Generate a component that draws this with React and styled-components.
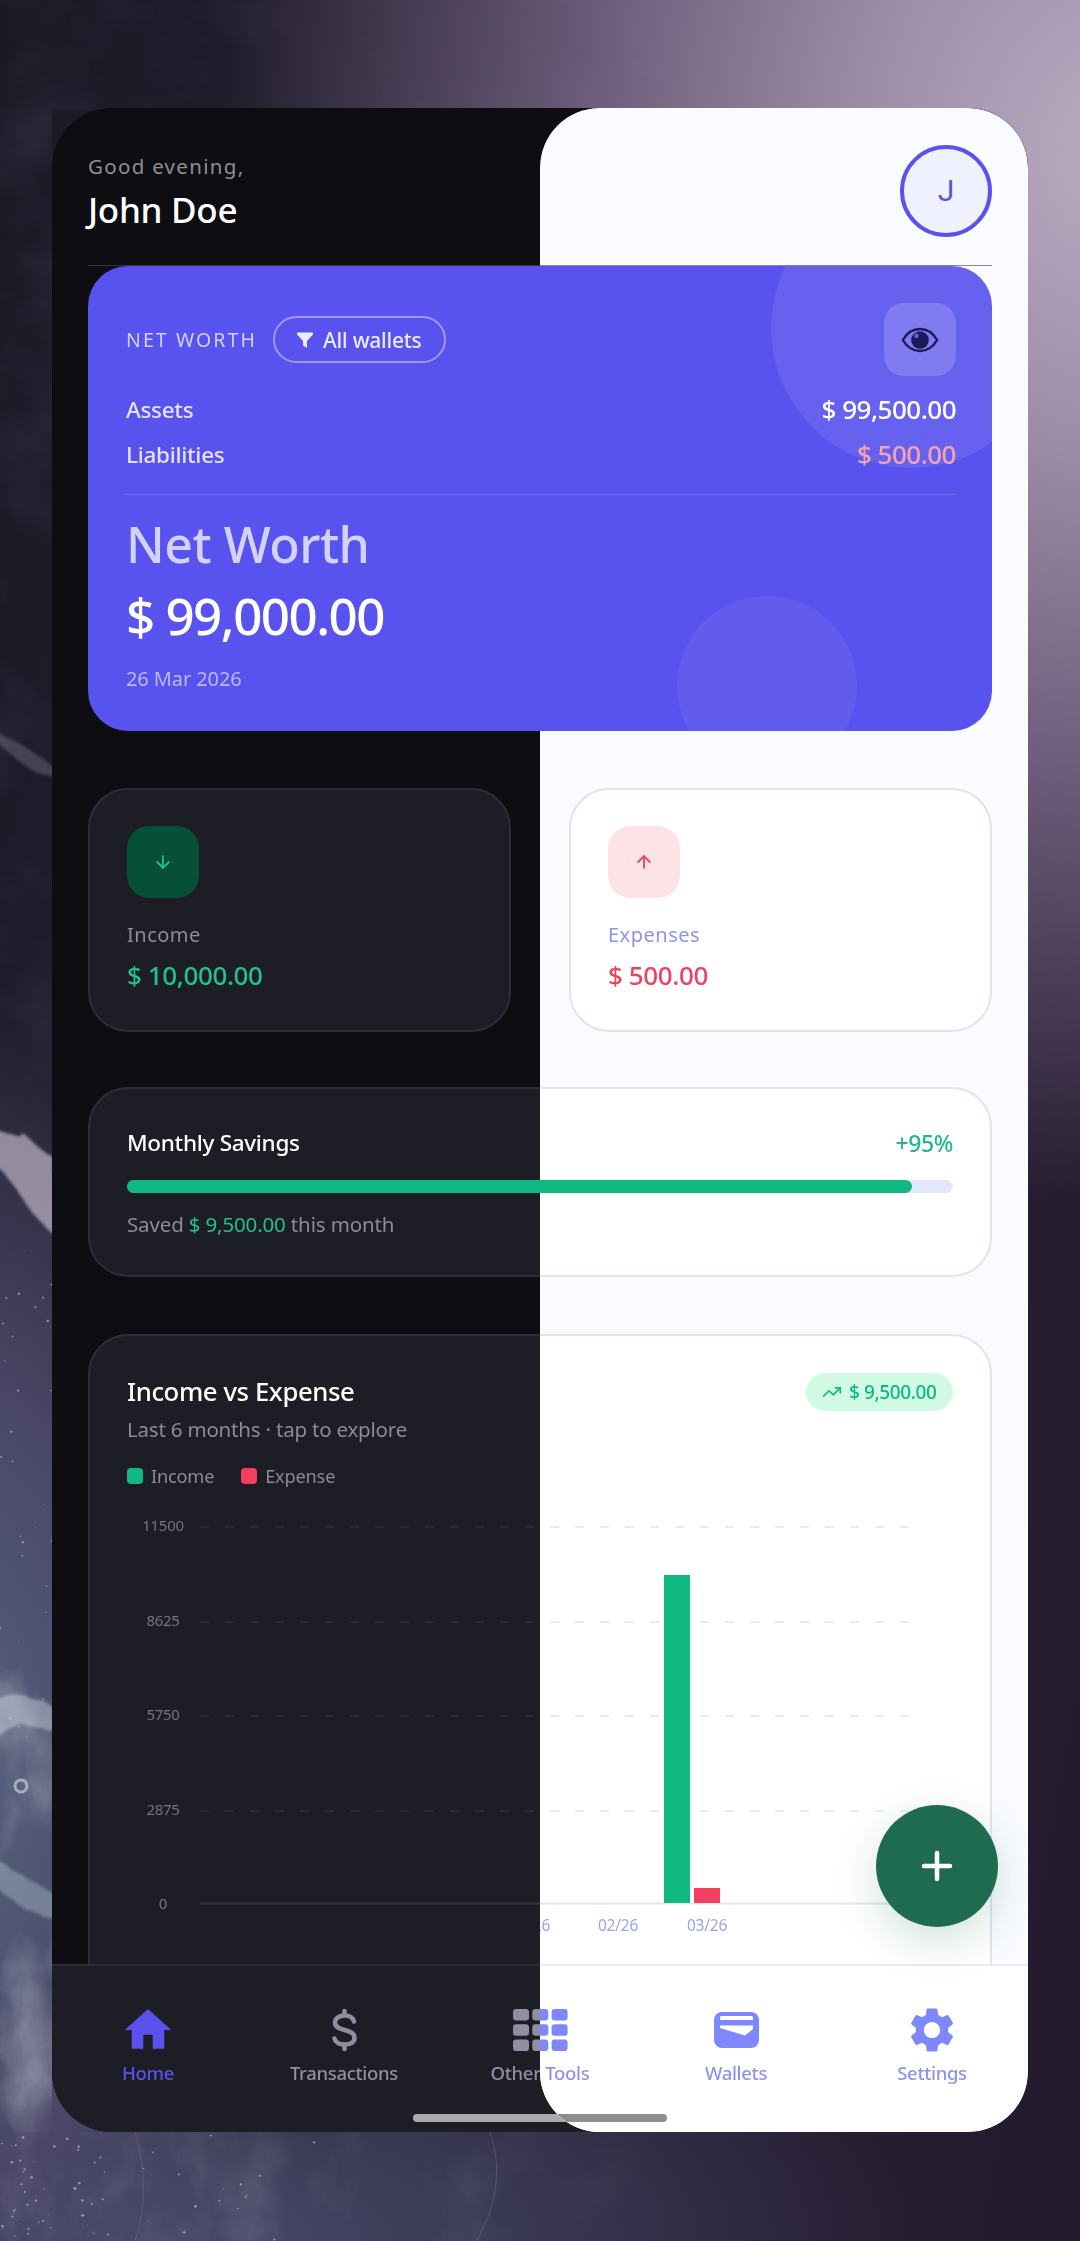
import React from 'react';
import styled, { createGlobalStyle, ThemeProvider } from 'styled-components';
import { ArrowDown, ArrowUp, TrendingUp } from 'lucide-react';
import { MdHome, MdSettings } from 'react-icons/md';

const FONT = '"Noto Sans", "Open Sans", sans-serif';

const darkTheme = {
  name: 'dark',
  screen: '#0d0d12', card: '#1c1d25', border: '#2c2e3b', headerLine: 'rgba(255,255,255,.16)',
  navBg: '#1c1d25', navBorder: '#2a2b36',
  navIcon: '#8f8fa1', navText: '#8f8fa1', grid: '#2e2f3a', axis: '#33343f', tick: '#74757f',
  handle: '#ababab', track: '#10b981', plotted: false,
};
const lightTheme = {
  name: 'light',
  screen: '#f9fbfe', card: '#ffffff', border: '#dfe3f4', headerLine: '#85858c',
  navBg: '#ffffff', navBorder: '#e9ecf8',
  navIcon: '#7f88fb', navText: '#8f94e8', grid: '#e2e5f0', axis: '#e2e6f2', tick: '#9ea2ea',
  handle: '#8e8e8e', track: '#e2e8fb', plotted: true,
};

const Global = createGlobalStyle`
  html, body { margin: 0; padding: 0; }
  body {
    font-family: ${FONT};
    background-color: #241a2e;
    background-image:
      radial-gradient(ellipse 900px 1050px at 1120px 150px, #bbabc2 0%, #9d8da8 28%, #6e5f7c 58%, rgba(70,56,84,0) 100%),
      radial-gradient(ellipse 420px 800px at -60px 1780px, #56647e 0%, #4a4767 50%, rgba(60,54,84,0) 100%),
      radial-gradient(ellipse 760px 300px at 160px 2241px, #474b6b 0%, rgba(58,52,80,0) 100%),
      linear-gradient(100deg, #1c1926 0%, #2a2338 60%, #241a2e 100%);
  }
  #root { height: 2241px; }
`;

const Page = styled.div`
  position: relative;
  box-sizing: border-box;
  height: 2241px;
  padding: 108px 52px 109px;
  overflow: hidden;
`;

const Wallpaper = styled.svg`
  position: absolute;
  inset: 0;
  width: 1080px;
  height: 2241px;
`;

const Frame = styled.main`
  position: relative;
  height: 2024px;
  border-radius: 60px;
  overflow: hidden;
`;

const LightClip = styled.div`
  position: absolute;
  top: 0;
  right: 0;
  bottom: 0;
  width: 488px;
  border-radius: 60px;
  overflow: hidden;
`;

const LightLayer = styled.div`
  position: absolute;
  top: 0;
  right: 0;
  bottom: 0;
  width: 976px;
`;

/* The dark and the light screen share one layout: each text shows only in the half it lies in. */
const Side = styled.span`
  visibility: ${p => (p.$on === p.theme.name ? 'visible' : 'hidden')};
`;

const ScreenBox = styled.div`
  position: relative;
  display: flex;
  flex-direction: column;
  height: 100%;
  background: ${p => p.theme.screen};
`;

const Header = styled.header`
  display: flex;
  justify-content: space-between;
  align-items: flex-start;
  box-sizing: border-box;
  height: 158px;
  margin: 0 36px;
  padding-top: 37px;
  border-bottom: 1px solid ${p => p.theme.headerLine};
`;

const Greeting = styled.div`
  font-size: 20.5px;
  line-height: 28px;
  letter-spacing: 1.3px;
  color: #8f8f99;
  margin-top: 7px;
`;

const UserName = styled.div`
  font-size: 35px;
  line-height: 44px;
  font-weight: 500;
  letter-spacing: -0.3px;
  color: #fff;
  margin-top: 8px;
`;

const Avatar = styled.div`
  box-sizing: border-box;
  width: 92px;
  height: 92px;
  border: 4px solid #5b52ee;
  border-radius: 50%;
  background: #eff2fe;
  color: #5b52ee;
  display: flex;
  align-items: center;
  justify-content: center;
  font-family: Roboto, sans-serif;
  font-size: 30px;
  line-height: 1;
`;

const HeroCard = styled.section`
  position: relative;
  box-sizing: border-box;
  height: 465px;
  margin: 0 36px;
  padding: 37px 36px 0 38px;
  border-radius: 40px;
  background: #5852ee;
  overflow: hidden;
`;

const Bubble = styled.div`
  position: absolute;
  border-radius: 50%;
  background: ${p => p.$fill};
  width: ${p => p.$size}px;
  height: ${p => p.$size}px;
  ${p => p.$pos}
`;

const HeroContent = styled.div`
  position: relative;
`;

const HeroTop = styled.div`
  display: flex;
  align-items: center;
  justify-content: space-between;
`;

const HeroTopLeft = styled.div`
  display: flex;
  align-items: center;
  gap: 16px;
`;

const Overline = styled.span`
  font-size: 19.5px;
  letter-spacing: 2.1px;
  color: #d2d1fb;
`;

const WalletPill = styled.div`
  box-sizing: border-box;
  display: flex;
  align-items: center;
  gap: 9px;
  width: 173px;
  height: 47px;
  padding: 0 0 0 21px;
  border: 2px solid rgba(255, 255, 255, .42);
  border-radius: 24px;
  color: #eceafe;
  font-size: 21px;
  font-weight: 500;
  letter-spacing: -0.25px;
  white-space: nowrap;
`;

const EyeButton = styled.div`
  width: 72px;
  height: 73px;
  border-radius: 20px;
  background: rgba(255, 255, 255, .17);
  display: flex;
  align-items: center;
  justify-content: center;
`;

const BalanceRow = styled.div`
  display: flex;
  justify-content: space-between;
  align-items: center;
  height: 32px;
  margin-top: ${p => p.$top}px;
`;

const BalanceLabel = styled.span`
  font-size: 22.5px;
  font-weight: 500;
  letter-spacing: -0.3px;
  color: #e4e3fd;
`;

const BalanceValue = styled.span`
  font-size: 26px;
  font-weight: 500;
  letter-spacing: -0.5px;
  color: ${p => p.$color};
`;

const HeroRule = styled.div`
  height: 1px;
  margin: 24px 2px 0 0;
  background: rgba(255, 255, 255, .18);
`;

const HeroTitle = styled.div`
  font-size: 50px;
  line-height: 62px;
  font-weight: 500;
  letter-spacing: -0.5px;
  color: #d3d2fb;
  margin-top: 18px;
`;

const HeroAmount = styled.div`
  font-size: 51px;
  line-height: 62px;
  font-weight: 500;
  letter-spacing: -1.5px;
  color: #fff;
  margin-top: 9px;
`;

const HeroDate = styled.div`
  font-size: 20px;
  line-height: 28px;
  letter-spacing: -0.1px;
  color: #bbb9f8;
  margin-top: 19px;
`;

const StatGrid = styled.div`
  display: grid;
  grid-template-columns: 1fr 1fr;
  gap: 58px;
  margin: 57px 36px 0;
`;

const Panel = styled.section`
  box-sizing: border-box;
  border: 2px solid ${p => p.theme.border};
  border-radius: 40px;
  background: ${p => p.theme.card};
`;

const StatCard = styled(Panel)`
  height: 244px;
  padding: 36px 37px 0;
`;

const StatIcon = styled.div`
  width: 72px;
  height: 72px;
  border-radius: 22px;
  background: ${p => p.$bg};
  color: ${p => p.$fg};
  display: flex;
  align-items: center;
  justify-content: center;
`;

const StatLabel = styled.div`
  font-size: 20px;
  line-height: 28px;
  letter-spacing: 0.5px;
  color: ${p => p.$color};
  margin-top: 23px;
`;

const StatValue = styled.div`
  font-size: 26px;
  line-height: 36px;
  font-weight: 500;
  letter-spacing: -0.4px;
  color: ${p => p.$color};
  margin-top: 8px;
`;

const SavingsCard = styled(Panel)`
  height: 190px;
  margin: 55px 36px 0;
  padding: 38px 37px 0;
`;

const SpacedRow = styled.div`
  display: flex;
  justify-content: space-between;
  align-items: center;
`;

const SavingsTitle = styled.div`
  font-size: 22.5px;
  line-height: 30px;
  font-weight: 500;
  letter-spacing: -0.3px;
  color: #fff;
`;

const Percent = styled.div`
  font-size: 23px;
  font-weight: 500;
  letter-spacing: -0.4px;
  color: #1fb98a;
`;

const ProgressTrack = styled.div`
  height: 13px;
  margin-top: 21px;
  border-radius: 7px;
  background: ${p => p.theme.track};
  overflow: hidden;
`;

const ProgressFill = styled.div`
  height: 100%;
  border-radius: 7px;
  background: #10b981;
`;

const SavedText = styled.div`
  font-size: 20.5px;
  line-height: 28px;
  letter-spacing: -0.15px;
  color: #8c8c97;
  margin-top: 17px;
`;

const SavedAmount = styled.span`
  color: #22c08c;
`;

const ChartCard = styled(Panel)`
  flex: none;
  height: 760px;
  margin: 57px 36px 0;
  padding: 37px 37px 0;
`;

const ChartTitle = styled.div`
  font-size: 25.7px;
  line-height: 38px;
  font-weight: 500;
  letter-spacing: -0.4px;
  color: #fff;
`;

const TrendPill = styled.div`
  display: flex;
  align-items: center;
  gap: 7px;
  width: 147px;
  box-sizing: border-box;
  height: 38px;
  padding: 0 0 0 16px;
  border-radius: 19px;
  background: #d1fae5;
  color: #10b981;
  font-size: 19px;
  font-weight: 500;
  letter-spacing: -0.4px;
  white-space: nowrap;
`;

const ChartSub = styled.div`
  font-size: 20.5px;
  line-height: 28px;
  letter-spacing: -0.2px;
  color: #8c8c97;
  margin-top: 4px;
`;

const Legend = styled.div`
  display: flex;
  align-items: center;
  gap: 27px;
  height: 26px;
  margin-top: 20px;
`;

const LegendItem = styled.div`
  display: flex;
  align-items: center;
  gap: 8px;
  font-size: 18.2px;
  letter-spacing: -0.2px;
  color: #8c8c97;
`;

const Swatch = styled.span`
  width: 16px;
  height: 16px;
  border-radius: 4px;
  background: ${p => p.$color};
`;

const ChartSvg = styled.svg`
  display: block;
  margin-top: 12px;
  width: 826px;
  height: 460px;
  overflow: visible;
  font-family: ${FONT};
`;

const Scroll = styled.div`
  flex: 1;
  min-height: 0;
  overflow: hidden;
`;

const NavBar = styled.nav`
  flex: none;
  box-sizing: border-box;
  height: 168px;
  padding: 39px 0 0;
  display: grid;
  grid-template-columns: repeat(5, 196px);
  justify-content: center;
  border-top: 2px solid ${p => p.theme.navBorder};
  background: ${p => p.theme.navBg};
`;

const NavItem = styled.div`
  display: flex;
  flex-direction: column;
  align-items: center;
  color: ${p => (p.$active ? '#5b52ee' : p.theme.navIcon)};
`;

const NavIconBox = styled.div`
  height: 50px;
  display: flex;
  align-items: center;
  justify-content: center;
`;

const NavLabel = styled.div`
  margin-top: 4px;
  font-size: 18.5px;
  line-height: 28px;
  font-weight: 500;
  letter-spacing: -0.3px;
  white-space: pre;
  color: ${p => (p.$active ? '#5b52ee' : p.theme.navText)};
`;

const Fab = styled.div`
  position: absolute;
  right: 30px;
  bottom: 205px;
  width: 122px;
  height: 122px;
  border-radius: 50%;
  background: #1f6b52;
  box-shadow: 0 14px 44px rgba(31, 107, 82, .2);
  display: flex;
  align-items: center;
  justify-content: center;
`;

const HomeHandle = styled.div`
  position: absolute;
  left: 361px;
  bottom: 10px;
  width: 254px;
  height: 8px;
  border-radius: 4px;
  background: ${p => p.theme.handle};
`;

const FilterIcon = () => (
  <svg width="18" height="18" viewBox="0 0 18 18" aria-hidden="true">
    <path d="M1 1.500h16v2L11 10v7l-4-2.400V10L1 3.500z" fill="currentColor" />
  </svg>
);

const EyeIcon = () => (
  <svg width="38" height="26" viewBox="0 0 38 26" aria-hidden="true">
    <path d="M1.800 13C6 5.800 12 2 19 2s13 3.800 17.200 11C32 20.200 26 24 19 24S6 20.200 1.800 13z" fill="none" stroke="#1c1a58" strokeWidth="2.400" strokeLinejoin="round" />
    <circle cx="19" cy="13" r="8.800" fill="#1c1a58" />
    <circle cx="15.400" cy="8.800" r="2.400" fill="#5e58e8" />
  </svg>
);

const DollarIcon = () => (
  <svg width="25" height="42" viewBox="0 0 25 42" aria-hidden="true" fill="none" stroke="currentColor" strokeWidth="4.500" strokeLinecap="round">
    <path d="M22 12.500C21 9 18 6.500 12.500 6.500 7 6.500 3 9.500 3 13.500c0 4.500 4 6 9.500 7.500s10 3 10 8c0 4-4 6.500-10 6.500-5.500 0-9-2.500-10-6" />
    <path d="M12.500 2v4M12.500 36v4" />
  </svg>
);

const GridIcon = () => {
  const cells = [];
  for (let r = 0; r < 3; r += 1) {
    for (let c = 0; c < 3; c += 1) {
      cells.push(<rect key={`${r}-${c}`} x={c * 19.300} y={r * 15.300} width="16" height="11.500" rx="3" fill="currentColor" />);
    }
  }
  return <svg width="55" height="42" viewBox="0 0 55 42" aria-hidden="true">{cells}</svg>;
};

const WalletIcon = ({ cut }) => (
  <svg width="45" height="36" viewBox="0 0 45 36" aria-hidden="true">
    <rect width="45" height="36" rx="8" fill="currentColor" />
    <path d="M6 5.500c0-1 .8-1.500 1.800-1.500h29.400c1 0 1.800.500 1.800 1.500V8H6z" fill={cut} />
    <path d="M6 13.500h33v3.500l-8 6.500-25-7.500z" fill={cut} />
  </svg>
);

const PlusIcon = () => (
  <svg width="32" height="32" viewBox="0 0 32 32" aria-hidden="true">
    <path d="M16 3v26M3 16h26" stroke="#fff" strokeWidth="4.500" strokeLinecap="round" />
  </svg>
);

const ticks = [
  { label: '11500', y: 25 },
  { label: '8625', y: 120 },
  { label: '5750', y: 214 },
  { label: '2875', y: 309 },
];
const xLabels = [
  { label: '01/26', x: 403 },
  { label: '02/26', x: 491 },
  { label: '03/26', x: 580 },
];

const Chart = ({ theme }) => (
  <ChartSvg viewBox="0 0 826 460" role="img">
    {ticks.map(t => (
      <g key={t.label}>
        {!theme.plotted && <text x="36" y={t.y + 5} textAnchor="middle" fontSize="15" letterSpacing="-0.3" fill={theme.tick}>{t.label}</text>}
        <line x1="73" x2="787" y1={t.y + 1} y2={t.y + 1} stroke={theme.grid} strokeWidth="1.500" strokeDasharray="9 16" />
      </g>
    ))}
    {!theme.plotted && <text x="36" y="408" textAnchor="middle" fontSize="15" fill={theme.tick}>0</text>}
    <line x1="73" x2="826" y1="402.500" y2="402.500" stroke={theme.axis} strokeWidth="2" />
    {theme.plotted && (
      <g>
        <rect x="537" y="74" width="26" height="328" fill="#10b981" />
        <rect x="567" y="387" width="26" height="15" fill="#f43f5e" />
        {xLabels.map(l => (
          <text key={l.label} x={l.x} y="430" textAnchor="middle" fontSize="15.500" letterSpacing="-0.2" fill={theme.tick}>{l.label}</text>
        ))}
      </g>
    )}
  </ChartSvg>
);

const navEntries = [
  { key: 'home', label: <Side $on="dark">Home</Side>, active: true, icon: () => <MdHome size={56} /> },
  { key: 'tx', label: <Side $on="dark">Transactions</Side>, icon: () => <DollarIcon /> },
  { key: 'tools', label: <><Side $on="dark">Other </Side><Side $on="light">Tools</Side></>, icon: () => <GridIcon /> },
  { key: 'wallets', label: <Side $on="light">Wallets</Side>, icon: theme => <WalletIcon cut={theme.navBg} /> },
  { key: 'settings', label: <Side $on="light">Settings</Side>, icon: () => <MdSettings size={54} /> },
];

const Screen = ({ theme }) => (
  <ThemeProvider theme={theme}>
    <ScreenBox>
      <Header>
        <div>
          <Greeting><Side $on="dark">Good evening,</Side></Greeting>
          <UserName><Side $on="dark">John Doe</Side></UserName>
        </div>
        <Avatar><Side $on="light">J</Side></Avatar>
      </Header>
      <Scroll>
        <HeroCard>
          <Bubble $size={280} $fill="rgba(255,255,255,.09)" $pos="right: -59px; top: -78px;" />
          <Bubble $size={180} $fill="rgba(255,255,255,.055)" $pos="right: 135px; bottom: -45px;" />
          <HeroContent>
            <HeroTop>
              <HeroTopLeft>
                <Overline><Side $on="dark">NET WORTH</Side></Overline>
                <WalletPill><FilterIcon /><Side $on="dark">All wallets</Side></WalletPill>
              </HeroTopLeft>
              <EyeButton><EyeIcon /></EyeButton>
            </HeroTop>
            <BalanceRow $top={17}>
              <BalanceLabel><Side $on="dark">Assets</Side></BalanceLabel>
              <BalanceValue $color="#ffffff"><Side $on="light">$ 99,500.00</Side></BalanceValue>
            </BalanceRow>
            <BalanceRow $top={13}>
              <BalanceLabel><Side $on="dark">Liabilities</Side></BalanceLabel>
              <BalanceValue $color="#f5a3b0"><Side $on="light">$ 500.00</Side></BalanceValue>
            </BalanceRow>
            <HeroRule />
            <HeroTitle><Side $on="dark">Net Worth</Side></HeroTitle>
            <HeroAmount><Side $on="dark">$ 99,000.00</Side></HeroAmount>
            <HeroDate><Side $on="dark">26 Mar 2026</Side></HeroDate>
          </HeroContent>
        </HeroCard>
        <StatGrid>
          <StatCard>
            <StatIcon $bg="#055037" $fg="#22c08c"><ArrowDown size={20} strokeWidth={2.2} /></StatIcon>
            <StatLabel $color="#8c8c97"><Side $on="dark">Income</Side></StatLabel>
            <StatValue $color="#22c08c"><Side $on="dark">$ 10,000.00</Side></StatValue>
          </StatCard>
          <StatCard>
            <StatIcon $bg="#fde3e6" $fg="#f43f5e"><ArrowUp size={20} strokeWidth={2.2} /></StatIcon>
            <StatLabel $color="#8f94e8"><Side $on="light">Expenses</Side></StatLabel>
            <StatValue $color="#ee4360"><Side $on="light">$ 500.00</Side></StatValue>
          </StatCard>
        </StatGrid>
        <SavingsCard>
          <SpacedRow>
            <SavingsTitle><Side $on="dark">Monthly Savings</Side></SavingsTitle>
            <Percent><Side $on="light">+95%</Side></Percent>
          </SpacedRow>
          <ProgressTrack>
            <ProgressFill style={{ width: '95%' }} />
          </ProgressTrack>
          <SavedText><Side $on="dark">Saved <SavedAmount>$ 9,500.00</SavedAmount> this month</Side></SavedText>
        </SavingsCard>
        <ChartCard>
          <SpacedRow>
            <ChartTitle><Side $on="dark">Income vs Expense</Side></ChartTitle>
            <TrendPill><TrendingUp size={20} strokeWidth={2} /><Side $on="light">$ 9,500.00</Side></TrendPill>
          </SpacedRow>
          <ChartSub><Side $on="dark">Last 6 months · tap to explore</Side></ChartSub>
          <Legend>
            <LegendItem><Swatch $color="#10b981" /><Side $on="dark">Income</Side></LegendItem>
            <LegendItem><Swatch $color="#f43f5e" /><Side $on="dark">Expense</Side></LegendItem>
          </Legend>
          <Chart theme={theme} />
        </ChartCard>
      </Scroll>
      <NavBar>
        {navEntries.map(n => (
          <NavItem key={n.key} $active={n.active}>
            <NavIconBox>{n.icon(theme)}</NavIconBox>
            <NavLabel $active={n.active}>{n.label}</NavLabel>
          </NavItem>
        ))}
      </NavBar>
      <Fab><PlusIcon /></Fab>
      <HomeHandle />
    </ScreenBox>
  </ThemeProvider>
);

const rnd = i => {
  const v = Math.sin(i * 127.1 + 11.7) * 43758.5453;
  return v - Math.floor(v);
};
const specks = Array.from({ length: 60 }, (_, i) => ({
  x: rnd(i) * rnd(i + 500) * 360,
  y: 2134 + rnd(i + 1000) * 106,
  r: 0.4 + rnd(i + 2000) * 1,
}));
const sideSpecks = Array.from({ length: 30 }, (_, i) => ({
  x: rnd(i + 3000) * 52,
  y: 1240 + rnd(i + 4000) * 500,
  r: 0.4 + rnd(i + 5000) * 0.8,
}));

const Backdrop = () => (
  <Wallpaper viewBox="0 0 1080 2241" aria-hidden="true">
    <defs>
      <filter id="smoke" x="0" y="0" width="100%" height="100%">
        <feTurbulence type="fractalNoise" baseFrequency="0.014 0.009" numOctaves="5" seed="9" />
        <feColorMatrix values="0 0 0 0 .78  0 0 0 0 .8  0 0 0 0 .9  0 0 0 2.200 -1.050" />
      </filter>
      <filter id="ink" x="0" y="0" width="100%" height="100%">
        <feTurbulence type="fractalNoise" baseFrequency="0.01" numOctaves="4" seed="3" />
        <feColorMatrix values="0 0 0 0 .06  0 0 0 0 .05  0 0 0 0 .09  0 0 0 2.400 -1.050" />
      </filter>
      <filter id="wisp" x="-20%" y="-20%" width="140%" height="140%">
        <feTurbulence type="fractalNoise" baseFrequency="0.05" numOctaves="3" seed="4" result="n" />
        <feDisplacementMap in="SourceGraphic" in2="n" scale="12" />
        <feGaussianBlur stdDeviation="1.500" />
      </filter>
      <linearGradient id="fadeRight" x1="0" x2="1" y1="0" y2="0">
        <stop offset="0" stopColor="#fff" />
        <stop offset="1" stopColor="#fff" stopOpacity="0" />
      </linearGradient>
      <mask id="leftFade"><rect width="700" height="2241" fill="url(#fadeRight)" /></mask>
    </defs>
    <g mask="url(#leftFade)">
      <rect width="700" height="110" filter="url(#ink)" opacity=".3" />
      <rect y="110" width="52" height="1000" filter="url(#ink)" opacity=".35" />
      <rect y="1660" width="52" height="472" filter="url(#smoke)" opacity=".4" />
      <rect y="2132" width="640" height="109" filter="url(#smoke)" opacity=".22" />
    </g>
    <g filter="url(#wisp)" fill="#d5ccdd">
      <path d="M-6 1128c14 4 26 12 30 6 8 6 14 16 32 24v78c-22-14-46-62-62-72z" opacity=".6" />
      <path d="M-6 730c18 8 40 22 62 38v10c-26-4-52-28-62-40z" opacity=".22" />
      <path d="M-6 1700c20-8 44-6 62 10v20c-22-4-42-6-62 6z" fill="#e2e9ed" opacity=".4" />
      <path d="M-6 1860c18 6 40 24 62 34v26c-22-8-44-14-62-36z" fill="#b9ccd5" opacity=".38" />
    </g>
    <circle cx="21" cy="1786" r="6" fill="none" stroke="#d5dfe4" strokeWidth="3" opacity=".6" />
    <g fill="none" stroke="#8487a6" strokeWidth="1" opacity=".35">
      <path d="M490 2132c14 40 4 80-14 109" />
      <path d="M135 2132c12 40 10 80 0 109" />
    </g>
    <g fill="#e8edf2" opacity=".5">
      {specks.map((s, i) => <circle key={i} cx={s.x} cy={s.y} r={s.r} />)}
      {sideSpecks.map((s, i) => <circle key={`s${i}`} cx={s.x} cy={s.y} r={s.r} />)}
    </g>
  </Wallpaper>
);

export default function App() {
  return (
    <>
      <Global />
      <Page>
        <Backdrop />
        <Frame>
          <Screen theme={darkTheme} />
          <LightClip>
            <LightLayer>
              <Screen theme={lightTheme} />
            </LightLayer>
          </LightClip>
        </Frame>
      </Page>
    </>
  );
}
